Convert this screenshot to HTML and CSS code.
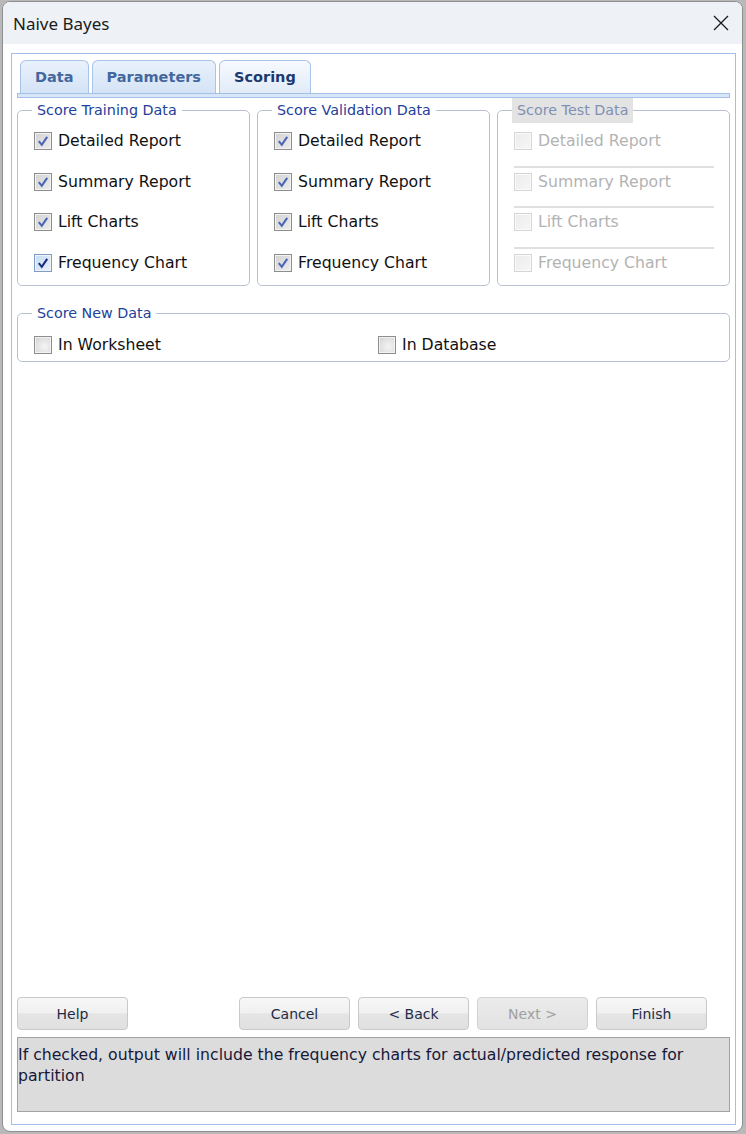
FILE: index.html
```html
<!DOCTYPE html>
<html>
<head>
<meta charset="utf-8">
<title>Naive Bayes</title>
<link rel="stylesheet" href="styles.css">
</head>
<body>
<div class="window">
  <div class="titlebar">
    <span class="title">Naive Bayes</span>
    <span class="close"><svg width="16" height="16" viewBox="0 0 16 16"><path d="M1 1 L15 15 M15 1 L1 15" stroke="#1a1a1a" stroke-width="1.3" fill="none"/></svg></span>
  </div>
  <div class="client">
    <div class="panel">
      <div class="tabs">
        <div class="tab">Data</div>
        <div class="tab">Parameters</div>
        <div class="tab active">Scoring</div>
      </div>
      <div class="strip"></div>
      <div class="groups">
        <fieldset class="group">
          <legend>Score Training Data</legend>
          <div class="rows">
            <div class="row"><span class="cb checked"><svg viewBox="0 0 16 16"><path d="M3.2 8.2 L6.6 12.4 L12.8 3.2"/></svg></span><span class="label">Detailed Report</span></div>
            <div class="row"><span class="cb checked"><svg viewBox="0 0 16 16"><path d="M3.2 8.2 L6.6 12.4 L12.8 3.2"/></svg></span><span class="label">Summary Report</span></div>
            <div class="row"><span class="cb checked"><svg viewBox="0 0 16 16"><path d="M3.2 8.2 L6.6 12.4 L12.8 3.2"/></svg></span><span class="label">Lift Charts</span></div>
            <div class="row"><span class="cb checked focus"><svg viewBox="0 0 16 16"><path d="M3.2 8.2 L6.6 12.4 L12.8 3.2"/></svg></span><span class="label">Frequency Chart</span></div>
          </div>
        </fieldset>
        <fieldset class="group">
          <legend>Score Validation Data</legend>
          <div class="rows">
            <div class="row"><span class="cb checked"><svg viewBox="0 0 16 16"><path d="M3.2 8.2 L6.6 12.4 L12.8 3.2"/></svg></span><span class="label">Detailed Report</span></div>
            <div class="row"><span class="cb checked"><svg viewBox="0 0 16 16"><path d="M3.2 8.2 L6.6 12.4 L12.8 3.2"/></svg></span><span class="label">Summary Report</span></div>
            <div class="row"><span class="cb checked"><svg viewBox="0 0 16 16"><path d="M3.2 8.2 L6.6 12.4 L12.8 3.2"/></svg></span><span class="label">Lift Charts</span></div>
            <div class="row"><span class="cb checked"><svg viewBox="0 0 16 16"><path d="M3.2 8.2 L6.6 12.4 L12.8 3.2"/></svg></span><span class="label">Frequency Chart</span></div>
          </div>
        </fieldset>
        <fieldset class="group disabled">
          <legend>Score Test Data</legend>
          <div class="rows">
            <div class="row"><span class="cb off"></span><span class="label">Detailed Report</span></div>
            <div class="row"><span class="cb off"></span><span class="label">Summary Report</span></div>
            <div class="row"><span class="cb off"></span><span class="label">Lift Charts</span></div>
            <div class="row"><span class="cb off"></span><span class="label">Frequency Chart</span></div>
          </div>
        </fieldset>
      </div>
      <fieldset class="group newdata">
        <legend>Score New Data</legend>
        <div class="rows">
          <div class="row inline">
            <div class="item first"><span class="cb"></span><span class="label">In Worksheet</span></div>
            <div class="item"><span class="cb"></span><span class="label">In Database</span></div>
          </div>
        </div>
      </fieldset>
      <div class="spacer"></div>
      <div class="buttons">
        <button class="btn">Help</button>
        <div class="btn-group">
          <button class="btn">Cancel</button>
          <button class="btn">&lt; Back</button>
          <button class="btn disabled">Next &gt;</button>
          <button class="btn">Finish</button>
        </div>
      </div>
      <div class="desc">If checked, output will include the frequency charts for actual/predicted response for partition</div>
    </div>
  </div>
</div>
</body>
</html>
```

FILE: styles.css
```css
html, body {
  margin: 0;
  padding: 0;
}
body {
  width: 746px;
  height: 1134px;
  overflow: hidden;
  background: #b9b9b9;
  font-family: "DejaVu Sans", Verdana, sans-serif;
}
.window {
  box-sizing: border-box;
  width: 741px;
  height: 1131px;
  margin: 1px 0 0 2px;
  background: #ffffff;
  border: 1px solid #8e8e8e;
  border-radius: 8px;
  overflow: hidden;
  display: flex;
  flex-direction: column;
}
.titlebar {
  flex: none;
  height: 42px;
  background: #eef2f7;
  display: flex;
  align-items: center;
  padding-left: 10px;
}
.title {
  flex: 1;
  font-family: "Noto Sans", sans-serif;
  font-size: 17px;
  color: #1b1b1b;
}
.close {
  display: flex;
  width: 16px;
  height: 16px;
  margin-right: 13px;
}
.client {
  flex: 1;
  display: flex;
  flex-direction: column;
  padding: 9px 6px 6px 8px;
  min-height: 0;
}
.panel {
  flex: 1;
  display: flex;
  flex-direction: column;
  border: 1px solid #a3bee7;
  padding: 6px 5px 12px 5px;
  min-height: 0;
}
.tabs {
  display: flex;
  gap: 3px;
  margin-left: 3px;
}
.tab {
  box-sizing: border-box;
  height: 33px;
  padding: 0 14px;
  border: 1px solid #a9c4ea;
  border-bottom: none;
  border-radius: 6px 6px 0 0;
  background: linear-gradient(#e9f1fb, #d4e3f6);
  font-weight: bold;
  font-size: 14.5px;
  color: #44679d;
  display: flex;
  align-items: center;
}
.tab.active {
  background: linear-gradient(#f7fafe, #e1ebf8);
  color: #1c396f;
}
.strip {
  box-sizing: border-box;
  height: 5px;
  border: 1px solid #a4c0e8;
  background: #d8e6f7;
}
.groups {
  display: grid;
  grid-template-columns: repeat(3, 1fr);
  column-gap: 7px;
}
.group {
  margin: 0;
  padding: 0 0 10px 0;
  border: 1px solid #b9c1d5;
  border-radius: 5px;
  min-width: 0;
}
.group legend {
  margin-left: 14px;
  padding: 0 5px;
  font-size: 14.3px;
  line-height: 25px;
  color: #22419b;
}
.group.disabled legend {
  background: #e3e3e3;
  color: #8190b2;
}
.rows {
  padding-top: 6px;
}
.row {
  display: flex;
  align-items: center;
  height: 24px;
  margin: 0 15px 0 16px;
  gap: 6px;
}
.row + .row {
  margin-top: 12.67px;
  border-top: 2px solid transparent;
  padding-top: 2px;
}
.group.disabled .row + .row {
  border-top-color: #e0e0e0;
}
.label {
  font-size: 15.7px;
  line-height: 24px;
  color: #111111;
  white-space: nowrap;
}
.group.disabled .label {
  color: #b3b3b3;
}
.cb {
  flex: none;
  box-sizing: border-box;
  width: 18px;
  height: 18px;
  border: 1px solid #8d8d8d;
  box-shadow: inset 0 0 0 1px #f3f3f3;
  background: radial-gradient(circle at 60% 60%, #f4f4f4 0%, #e2e2e2 55%, #cdcdcd 100%);
  display: flex;
  align-items: center;
  justify-content: center;
}
.cb svg {
  width: 14px;
  height: 14px;
}
.cb svg path {
  fill: none;
  stroke: #4e67b4;
  stroke-width: 2.4;
}
.cb.checked {
  background: linear-gradient(135deg, #d2d2d2, #ededed);
}
.cb.focus {
  border-color: #7e9cc8;
  background: linear-gradient(135deg, #c9dcf4, #e6f0fc);
}
.cb.focus svg path {
  stroke: #1b2d7f;
}
.cb.off {
  border-color: #d6d6d6;
  box-shadow: inset 0 0 0 1px #fafafa;
  background: linear-gradient(135deg, #ececec, #f6f6f6);
}
.newdata {
  margin-top: 15px;
  padding-bottom: 4px;
}
.newdata .rows {
  padding-top: 7px;
}
.row.inline {
  gap: 0;
}
.item {
  display: flex;
  align-items: center;
  gap: 6px;
}
.item.first {
  width: 344px;
}
.spacer {
  flex: 1;
}
.buttons {
  display: flex;
  align-items: center;
}
.btn-group {
  display: flex;
  gap: 8px;
  margin-left: auto;
  margin-right: 23px;
}
.btn {
  box-sizing: border-box;
  width: 111px;
  height: 33px;
  margin: 0;
  padding: 0;
  border: 1px solid #c9c9c9;
  border-radius: 4px;
  background: linear-gradient(#f7f7f7 0%, #f0f0f0 48%, #e4e4e4 52%, #e1e1e1 100%);
  font-family: "DejaVu Sans", Verdana, sans-serif;
  font-size: 14px;
  color: #1d2b46;
  display: flex;
  align-items: center;
  justify-content: center;
}
.btn.disabled {
  background: linear-gradient(#ebebeb, #e2e2e2);
  border-color: #d2d2d2;
  color: #a0a0a0;
}
.desc {
  box-sizing: border-box;
  height: 75px;
  margin-top: 7px;
  border: 1px solid #a2a2a2;
  background: #dcdcdc;
  padding: 6px 4px 0 0;
  font-size: 15.7px;
  line-height: 21px;
  color: #16183a;
}
```
